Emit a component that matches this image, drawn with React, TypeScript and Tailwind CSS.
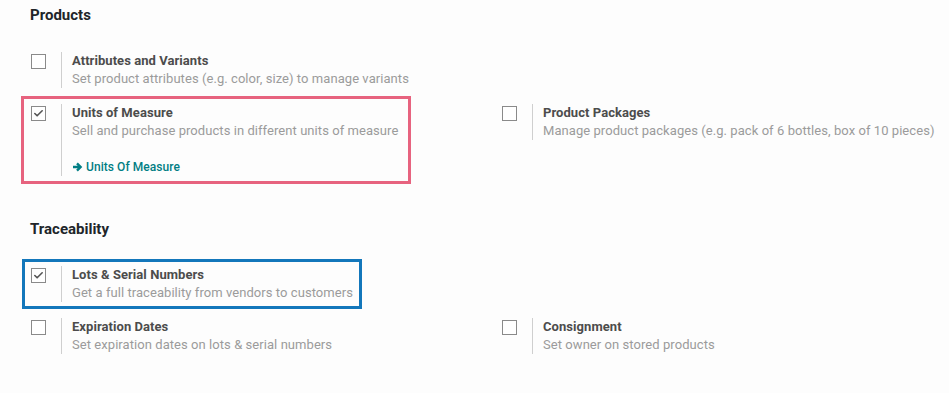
import { Check } from "lucide-react";

type Setting = {
  title: string;
  desc: string;
  checked?: boolean;
  link?: string;
  mark?: "pink" | "blue";
};

const products: Setting[] = [
  { title: "Attributes and Variants", desc: "Set product attributes (e.g. color, size) to manage variants" },
  {},
  { title: "Units of Measure", desc: "Sell and purchase products in different units of measure", checked: true, link: "Units Of Measure", mark: "pink" },
  { title: "Product Packages", desc: "Manage product packages (e.g. pack of 6 bottles, box of 10 pieces)" },
] as Setting[];

const traceability: Setting[] = [
  { title: "Lots & Serial Numbers", desc: "Get a full traceability from vendors to customers", checked: true, mark: "blue" },
  {},
  { title: "Expiration Dates", desc: "Set expiration dates on lots & serial numbers" },
  { title: "Consignment", desc: "Set owner on stored products" },
] as Setting[];

function ArrowIcon() {
  return (
    <svg width="11" height="10" viewBox="0 0 11 10" className="mr-[3px]">
      <path d="M1 5h7.2M5 1.4 8.6 5 5 8.6" stroke="#017e84" strokeWidth="2.4" fill="none" strokeLinecap="butt" strokeLinejoin="miter" />
    </svg>
  );
}

function SettingRow({ s }: { s: Setting }) {
  if (!s.title) return <div />;
  return (
    <div className="relative flex items-start">
      {s.mark === "pink" && (
        <div className="absolute left-[-10px] top-[-8px] w-[390px] h-[88px] border-[3px] border-[#e7637f] pointer-events-none" />
      )}
      {s.mark === "blue" && (
        <div className="absolute left-[-9px] top-[-7px] w-[340px] h-[50px] border-[3px] border-[#1377bb] pointer-events-none" />
      )}
      <div className="w-[30px] shrink-0 pt-[2px]">
        <div className="w-[15px] h-[15px] border border-[#8a8a8a] bg-white flex items-center justify-center">
          {s.checked && <Check size={11} strokeWidth={3.5} className="text-[#555]" />}
        </div>
      </div>
      <div className="border-l border-[#cfcfcf] pl-[10px] tracking-[0.06px]">
        <div className="text-[13px] leading-[18px] font-bold text-[#4c4c4c]">{s.title}</div>
        <div className="text-[13px] leading-[18px] text-[#9b9b9b]">{s.desc}</div>
        {s.link && (
          <div className="mt-[18px] flex items-center text-[12px] leading-[18px] font-medium text-[#017e84]">
            <ArrowIcon />
            {s.link}
          </div>
        )}
      </div>
    </div>
  );
}

export default function App() {
  return (
    <div className="w-[949px] h-[393px] bg-[#fdfdfd] overflow-hidden" style={{ fontFamily: "Roboto, 'Liberation Sans', sans-serif" }}>
      {/* Products */}
      <div className="pt-[5px] pl-[30px]">
        <h2 className="text-[15px] leading-[20px] font-bold text-[#212529]">Products</h2>
      </div>
      <div className="mt-[27px] pl-[31px] grid grid-cols-[471px_1fr] items-start gap-y-4">
        {products.map((s, i) => (
          <SettingRow key={i} s={s} />
        ))}
      </div>

      {/* Traceability */}
      <div className="mt-[43px] pl-[30px]">
        <h2 className="text-[15px] leading-[20px] font-bold text-[#212529]">Traceability</h2>
      </div>
      <div className="mt-[27px] pl-[31px] grid grid-cols-[471px_1fr] items-start gap-y-4">
        {traceability.map((s, i) => (
          <SettingRow key={i} s={s} />
        ))}
      </div>
    </div>
  );
}
